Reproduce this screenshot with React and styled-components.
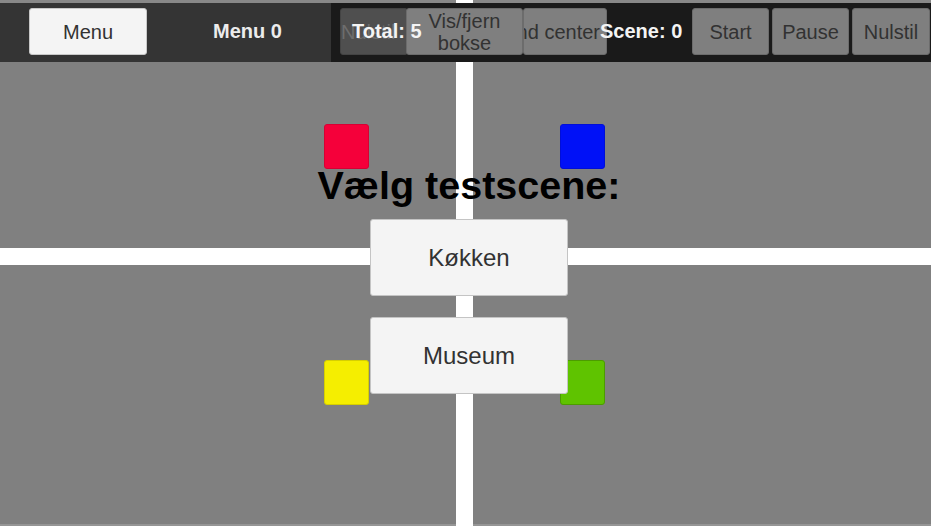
import React from 'react';
import styled, { createGlobalStyle } from 'styled-components';

const GlobalStyle = createGlobalStyle`
  html, body {
    margin: 0;
    padding: 0;
    overflow: hidden;
    background: #ffffff;
  }
  body {
    font-family: "Liberation Sans", Arial, sans-serif;
  }
`;

const Screen = styled.div`
  position: relative;
  width: 931px;
  height: 526px;
  overflow: hidden;
  background: #ffffff;
`;

const Scene = styled.div`
  display: grid;
  grid-template-columns: 456px 1fr;
  grid-template-rows: 248px 1fr;
  gap: 17px;
  height: 100%;
`;

const Quadrant = styled.div`
  display: flex;
  align-items: flex-start;
  justify-content: ${({ side }) => (side === 'left' ? 'flex-end' : 'flex-start')};
  padding-top: ${({ row }) => (row === 'top' ? '121px' : '95px')};
  padding-left: ${({ side }) => (side === 'right' ? '87px' : '0')};
  padding-right: ${({ side }) => (side === 'left' ? '87px' : '0')};
  background: #808080;
  border-top: ${({ row }) => (row === 'top' ? '3px solid #888888' : '0')};
  border-bottom: ${({ row }) => (row === 'bottom' ? '2px solid #959595' : '0')};
  box-sizing: border-box;
`;

const Box = styled.div`
  width: 45px;
  height: 45px;
  box-sizing: border-box;
  border-radius: 3px;
  background: ${({ color }) => color};
  border: 1px solid ${({ edge }) => edge};
`;

const TopBar = styled.div`
  position: absolute;
  top: 3px;
  left: 0;
  right: 0;
  height: 59px;
  display: flex;
`;

const LeftPanel = styled.div`
  width: 331px;
  display: flex;
  align-items: flex-start;
  padding: 5px 0 0 29px;
  box-sizing: border-box;
  background: #343434;
`;

const RightPanel = styled.div`
  position: relative;
  flex: 1;
  display: flex;
  align-items: flex-start;
  padding: 5px 1px 0 9px;
  background: #1a1a1a;
`;

const Button = styled.div`
  display: flex;
  align-items: center;
  justify-content: ${({ align }) => align || 'center'};
  width: ${({ w }) => w}px;
  height: 47px;
  box-sizing: border-box;
  flex-shrink: 0;
  overflow: hidden;
  white-space: nowrap;
  border-radius: 3px;
  font-size: 20px;
  line-height: 22px;
  text-align: center;
  color: #323232;
  background: #7f7f7f;
  border: 1px solid #6c6c6c;
`;

const LightButton = styled(Button)`
  background: #f4f4f4;
  border-color: #c8c8c8;
`;

const DarkButton = styled(Button)`
  color: #6d6d6d;
  background: #4f4f4f;
  border-color: #444444;
  margin-right: -2px;
`;

const TwoLine = styled.span`
  white-space: normal;
  width: 80px;
`;

const ClippedText = styled.span`
  padding-right: 6px;
`;

const Label = styled.div`
  font-size: 20px;
  font-weight: bold;
  color: #ececec;
  white-space: nowrap;
  line-height: 47px;
`;

const MenuLabel = styled(Label)`
  margin-left: 66px;
`;

const OverlayLabel = styled(Label)`
  position: absolute;
  top: 5px;
  left: ${({ x }) => x}px;
  color: #f4f4f4;
`;

const RightGroup = styled.div`
  display: flex;
  gap: 3px;
  margin-left: auto;
`;

const Chooser = styled.div`
  position: absolute;
  inset: 0;
  display: flex;
  flex-direction: column;
  align-items: center;
  padding-top: 162px;
  padding-left: 7px;
  box-sizing: border-box;
`;

const Title = styled.h1`
  margin: 0 0 11px;
  font-size: 39.5px;
  line-height: 46px;
  font-weight: bold;
  color: #000000;
`;

const SceneButton = styled.div`
  display: flex;
  align-items: center;
  justify-content: center;
  width: 198px;
  height: 77px;
  box-sizing: border-box;
  margin-bottom: 21px;
  border-radius: 3px;
  font-size: 24px;
  color: #323232;
  background: #f4f4f4;
  border: 1px solid #c4c4c4;
`;

const boxes = [
  { row: 'top', side: 'left', color: '#f5003a', edge: '#d80033' },
  { row: 'top', side: 'right', color: '#0011f7', edge: '#000fd8' },
  { row: 'bottom', side: 'left', color: '#f5ee00', edge: '#d6cf00' },
  { row: 'bottom', side: 'right', color: '#5fc300', edge: '#4c9c00' },
];

export default function App() {
  return (
    <>
      <GlobalStyle />
      <Screen>
        <Scene>
          {boxes.map((b) => (
            <Quadrant key={b.row + b.side} row={b.row} side={b.side}>
              <Box color={b.color} edge={b.edge} />
            </Quadrant>
          ))}
        </Scene>

        <TopBar>
          <LeftPanel>
            <LightButton w={118}>Menu</LightButton>
            <MenuLabel>Menu 0</MenuLabel>
          </LeftPanel>
          <RightPanel>
            <DarkButton w={68} align="flex-start">Nulstil</DarkButton>
            <Button w={117}>
              <TwoLine>Vis/fjern bokse</TwoLine>
            </Button>
            <Button w={84} align="flex-end">
              <ClippedText>Find center</ClippedText>
            </Button>
            <RightGroup>
              <Button w={77}>Start</Button>
              <Button w={77}>Pause</Button>
              <Button w={78}>Nulstil</Button>
            </RightGroup>
            <OverlayLabel x={21}>Total: 5</OverlayLabel>
            <OverlayLabel x={269}>Scene: 0</OverlayLabel>
          </RightPanel>
        </TopBar>

        <Chooser>
          <Title>Vælg testscene:</Title>
          <SceneButton>Køkken</SceneButton>
          <SceneButton>Museum</SceneButton>
        </Chooser>
      </Screen>
    </>
  );
}
